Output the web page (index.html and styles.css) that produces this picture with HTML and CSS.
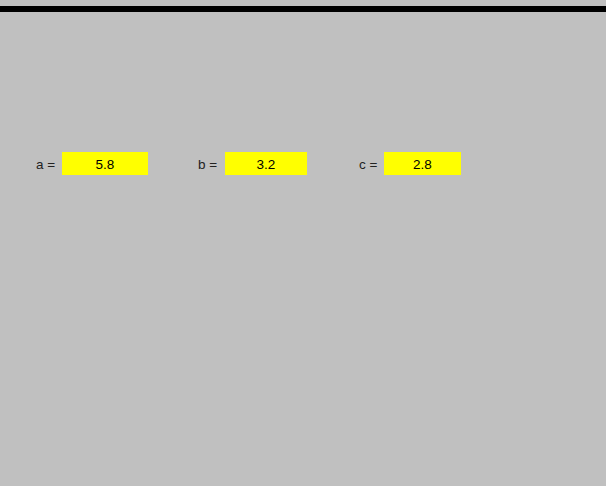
FILE: index.html
```html
<!DOCTYPE html>
<html>
<head>
<meta charset="utf-8">
<link rel="stylesheet" href="styles.css">
</head>
<body>
<div class="topbar"></div>
<div class="row">
  <div class="field f-a"><span class="label">a =</span><span class="box">5.8</span></div>
  <div class="field f-b"><span class="label">b =</span><span class="box">3.2</span></div>
  <div class="field f-c"><span class="label">c =</span><span class="box">2.8</span></div>
</div>
</body>
</html>
```
FILE: styles.css
```css
html, body {
  margin: 0;
  padding: 0;
  background: #c0c0c0;
  width: 606px;
  height: 486px;
  overflow: hidden;
  font-family: "Liberation Sans", Arial, sans-serif;
  font-size: 13.5px;
  color: #000;
}
.topbar {
  margin-top: 6px;
  height: 6px;
  background: #000;
}
.row {
  display: flex;
  margin-top: 140px;
  padding-left: 36px;
}
.field {
  display: flex;
  align-items: center;
  height: 23px;
}
.label {
  color: #222;
  padding-top: 2px;
}
.box {
  background: #ffff00;
  height: 23px;
  display: flex;
  align-items: center;
  justify-content: center;
  padding-top: 2px;
  box-sizing: border-box;
}
.f-a .label { width: 26px; }
.f-a .box { width: 86px; }
.f-b { margin-left: 50px; }
.f-b .label { width: 27px; }
.f-b .box { width: 82px; }
.f-c { margin-left: 52px; }
.f-c .label { width: 25px; }
.f-c .box { width: 77px; }
```
